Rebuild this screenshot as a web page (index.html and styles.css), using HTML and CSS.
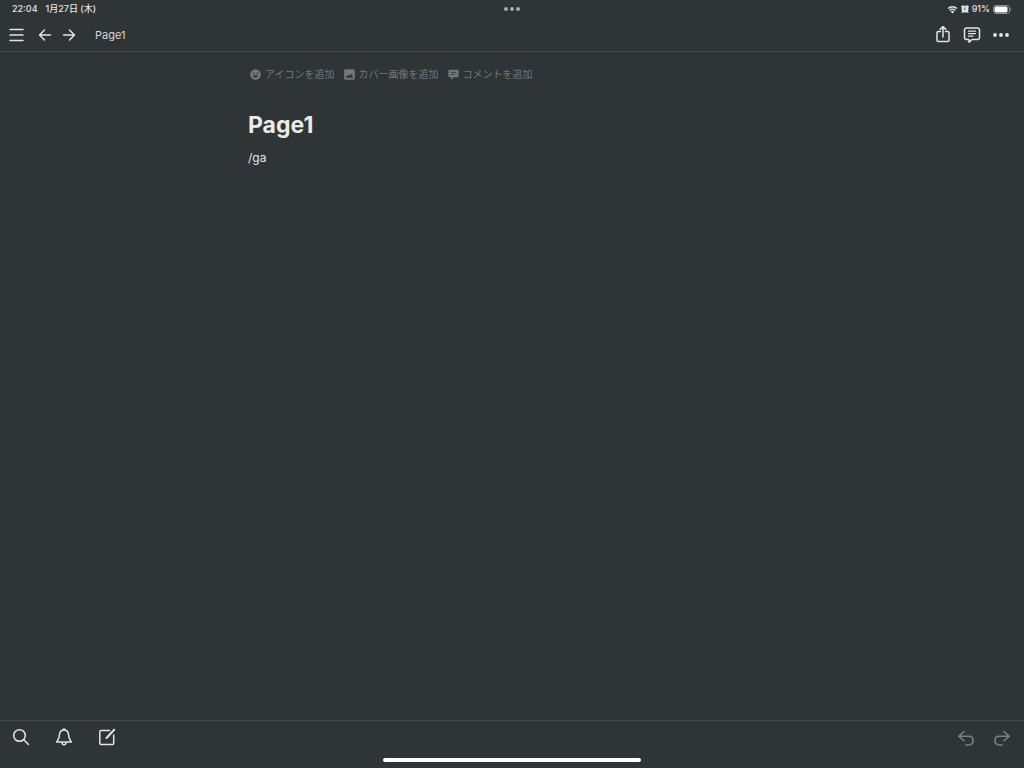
FILE: index.html
```html
<!DOCTYPE html>
<html lang="ja">
<head>
  <meta charset="UTF-8" />
  <meta name="viewport" content="width=device-width, initial-scale=1.0"/>
  <title>Page1</title>
  <link rel="stylesheet" href="styles.css">
</head>
<body>
  <!-- Status bar -->
  <div class="status-bar">
    <div class="status-left">
      <span>22:04</span>
      <span>1月27日 (木)</span>
    </div>
    <svg class="multitask" width="18" height="6" viewBox="0 0 18 6" fill="currentColor" aria-hidden="true">
      <circle cx="3" cy="3" r="2"/><circle cx="9" cy="3" r="2"/><circle cx="15" cy="3" r="2"/>
    </svg>
    <div class="status-right">
      <svg width="11" height="9" viewBox="0 0 12 10" fill="none" stroke="currentColor" stroke-width="1.6" aria-hidden="true">
        <path d="M1 4a7.2 7.2 0 0 1 10 0"/>
        <path d="M2.800 6.100a4.600 4.600 0 0 1 6.400 0"/>
        <path d="M6 9.500 4 7.500a2.800 2.800 0 0 1 4 0z" fill="currentColor" stroke="none"/>
      </svg>
      <svg width="8" height="8" viewBox="0 0 8 8" aria-hidden="true">
        <circle cx="4" cy="4.200" r="3.400" fill="currentColor"/>
        <path d="M.7 1.800 2 .7M7.300 1.800 6 .7M1.600 6.600l-.5.800M6.400 6.600l.5.800" stroke="currentColor" stroke-width="1.200" stroke-linecap="round"/>
        <path d="M4 2.400v2H2.600" fill="none" stroke="#2f3437" stroke-width=".7"/>
      </svg>
      <span>91%</span>
      <svg width="19" height="9" viewBox="0 0 19 9" aria-hidden="true">
        <rect x=".5" y=".5" width="16" height="8" rx="2.400" fill="none" stroke="#8b8f91"/>
        <rect x="1.500" y="1.500" width="13" height="6" rx="1.400" fill="#fff"/>
        <path d="M17.500 3v3q1-.5 1-1.500t-1-1.500z" fill="#8b8f91"/>
      </svg>
    </div>
  </div>

  <header class="topbar">
    <button type="button" class="icon-btn menu-btn" aria-label="メニュー">
      <svg viewBox="0 0 24 24"><path d="M5 6.500h13M5 12h13M5 17.500h13"/></svg>
    </button>
    <nav class="history">
      <button type="button" class="icon-btn" aria-label="戻る">
        <svg viewBox="0 0 24 24"><path d="M17.500 12h-11M11.500 7l-5 5 5 5"/></svg>
      </button>
      <button type="button" class="icon-btn" aria-label="進む">
        <svg viewBox="0 0 24 24"><path d="M6.500 12h11M12.500 7l5 5-5 5"/></svg>
      </button>
    </nav>
    <a href="#" class="crumb">Page1</a>
    <div class="actions">
      <button type="button" class="icon-btn" aria-label="共有">
        <svg viewBox="0 0 24 24"><path d="M9.500 8.500H7.200Q6 8.500 6 9.700v7.600q0 1.200 1.200 1.200h9.600q1.200 0 1.200-1.200V9.700q0-1.200-1.200-1.200h-2.300M12 14V3.800M9.200 6.400 12 3.600l2.800 2.800"/></svg>
      </button>
      <button type="button" class="icon-btn" aria-label="コメント">
        <svg viewBox="0 0 24 24"><path d="M6.500 5h11q2 0 2 2v7.500q0 2-2 2H12L9 19.300v-2.800H6.500q-2 0-2-2V7q0-2 2-2z"/><path class="thin" d="M8.500 8.200h7M8.500 10.700h7M8.500 13.200h4.500"/></svg>
      </button>
      <button type="button" class="icon-btn" aria-label="その他">
        <svg viewBox="0 0 24 24" class="solid"><circle cx="6" cy="12" r="1.900"/><circle cx="12" cy="12" r="1.900"/><circle cx="18" cy="12" r="1.900"/></svg>
      </button>
    </div>
  </header>

  <main class="page">
    <div class="page-hints">
      <button type="button" class="hint">
        <svg viewBox="0 0 12 12" aria-hidden="true">
          <circle cx="6" cy="6" r="5.800" fill="currentColor"/>
          <g fill="#2f3437"><circle cx="4" cy="4.600" r=".9"/><circle cx="8" cy="4.600" r=".9"/><path d="M2.900 6.800h6.200q-.7 2.400-3.100 2.400T2.900 6.800z"/></g>
        </svg>
        アイコンを追加
      </button>
      <button type="button" class="hint">
        <svg viewBox="0 0 12 12" aria-hidden="true">
          <rect x=".2" y=".2" width="11.600" height="11.600" rx="1.400" fill="currentColor"/>
          <path d="M2 9.500 4.200 6.200l1.500 1.700 2-3L10.200 9.500z" fill="#2f3437"/>
        </svg>
        カバー画像を追加
      </button>
      <button type="button" class="hint">
        <svg viewBox="0 0 12 12" aria-hidden="true">
          <path d="M2 .8h8q1.600 0 1.600 1.500v5Q11.600 9 10 9H6.500l-3 2.800V9H2Q.4 9 .4 7.300v-5Q.4.800 2 .8z" fill="currentColor"/>
          <path d="M3 3.700h6M3 6h4" stroke="#2f3437" stroke-width=".9"/>
        </svg>
        コメントを追加
      </button>
    </div>
    <h1>Page1</h1>
    <p class="block" contenteditable="true" spellcheck="false">/ga</p>
  </main>

  <footer class="bottom">
    <div class="toolbar">
      <button type="button" class="icon-btn" aria-label="検索">
        <svg viewBox="0 0 24 24"><circle cx="10.500" cy="10.500" r="5.800"/><path d="m14.800 14.800 4.700 4.700"/></svg>
      </button>
      <button type="button" class="icon-btn" aria-label="通知">
        <svg viewBox="0 0 24 24"><path d="M12 5c-3 0-4.300 2.100-4.500 4.500C7.300 13 6.800 14.500 4.700 17h14.600c-2.100-2.500-2.600-4-2.800-7.500C16.300 7.100 15 5 12 5zM11 4.800q0-.9 1-.9t1 .9"/><path d="M9.900 17.500q.3 2.200 2.100 2.200t2.100-2.200"/></svg>
      </button>
      <button type="button" class="icon-btn" aria-label="新規ページ">
        <svg viewBox="0 0 24 24"><path d="M14.500 5.500H6q-1.200 0-1.200 1.200v11.600q0 1.200 1.200 1.200h11.500q1.200 0 1.200-1.200V10"/><path class="pen" d="m11.500 13 7.700-8.200"/></svg>
      </button>
      <div class="undo-group">
        <button type="button" class="icon-btn" aria-label="元に戻す">
          <svg viewBox="0 0 24 24"><path d="M10 6.500 4.800 11.200l5.200 4.500M5 11.200h9.700q4.400 0 4.400 4.400T14.700 20H12"/></svg>
        </button>
        <button type="button" class="icon-btn" aria-label="やり直す">
          <svg viewBox="0 0 24 24"><path d="m14 6.500 5.200 4.700-5.200 4.500M19 11.200H9.300q-4.400 0-4.400 4.400T9.300 20H12"/></svg>
        </button>
      </div>
    </div>
    <div class="home-indicator"></div>
  </footer>
</body>
</html>
```

FILE: styles.css
```css
* { margin: 0; padding: 0; box-sizing: border-box; }
body {
  font-family: Inter, 'Noto Sans CJK JP', sans-serif;
  background: #2f3437;
  color: #e3e4e4;
  min-height: 100vh;
  display: flex;
  flex-direction: column;
}
button {
  background: none;
  border: none;
  color: inherit;
  font: inherit;
  cursor: pointer;
}
svg { display: block; flex-shrink: 0; }

/* Status bar */
.status-bar {
  display: grid;
  grid-template-columns: 1fr auto 1fr;
  align-items: center;
  height: 18px;
  padding: 0 12px;
  font-size: 9px;
  font-weight: 500;
  line-height: 18px;
  white-space: nowrap;
}
.status-left { display: flex; gap: 8px; }
.status-right {
  display: flex;
  align-items: center;
  justify-content: flex-end;
  gap: 3px;
}
.multitask { color: #a9acad; }

/* Top bar */
.topbar {
  display: flex;
  align-items: center;
  height: 34px;
  padding: 0 11px 0 5px;
  border-bottom: 1px solid #484c4f;
}
.icon-btn { width: 24px; height: 24px; }
.icon-btn svg {
  width: 24px;
  height: 24px;
  fill: none;
  stroke: currentColor;
  stroke-width: 1.5;
  stroke-linecap: round;
  stroke-linejoin: round;
}
.icon-btn .solid { fill: currentColor; stroke: none; }
.icon-btn .thin { stroke-width: 1.2; }
.icon-btn .pen { stroke-width: 2; }
.menu-btn { margin-right: 4px; }
.history { display: flex; margin-right: 14px; }
.crumb {
  color: #d5d6d7;
  font-size: 11px;
  line-height: 16px;
  text-decoration: none;
}
.actions { display: flex; gap: 5px; margin-left: auto; }

/* Page */
.page {
  flex-grow: 1;
  width: 100%;
  max-width: 528px;
  margin: 0 auto;
  padding-top: 14px;
}
.page-hints {
  display: flex;
  gap: 9px;
  padding-left: 2px;
  margin-bottom: 25px;
}
.hint {
  display: flex;
  align-items: center;
  gap: 4px;
  color: #73777a;
  font-size: 10px;
  line-height: 16px;
  white-space: nowrap;
}
.hint svg { width: 11px; height: 11px; }
.page h1 {
  color: #ebebeb;
  font-size: 23px;
  font-weight: 700;
  line-height: 36px;
  margin-bottom: 6px;
}
.block {
  font-size: 12px;
  line-height: 18px;
  outline: none;
}

/* Bottom bar */
.bottom { border-top: 1px solid #44484b; }
.toolbar {
  display: flex;
  align-items: center;
  gap: 19px;
  height: 32px;
  padding: 0 10px 0 9px;
}
.undo-group {
  display: flex;
  gap: 12px;
  margin-left: auto;
  color: #7d8183;
}
.home-indicator {
  width: 25%;
  min-width: 258px;
  height: 4px;
  margin: 5px auto 6px;
  border-radius: 2px;
  background: #fff;
}
```
